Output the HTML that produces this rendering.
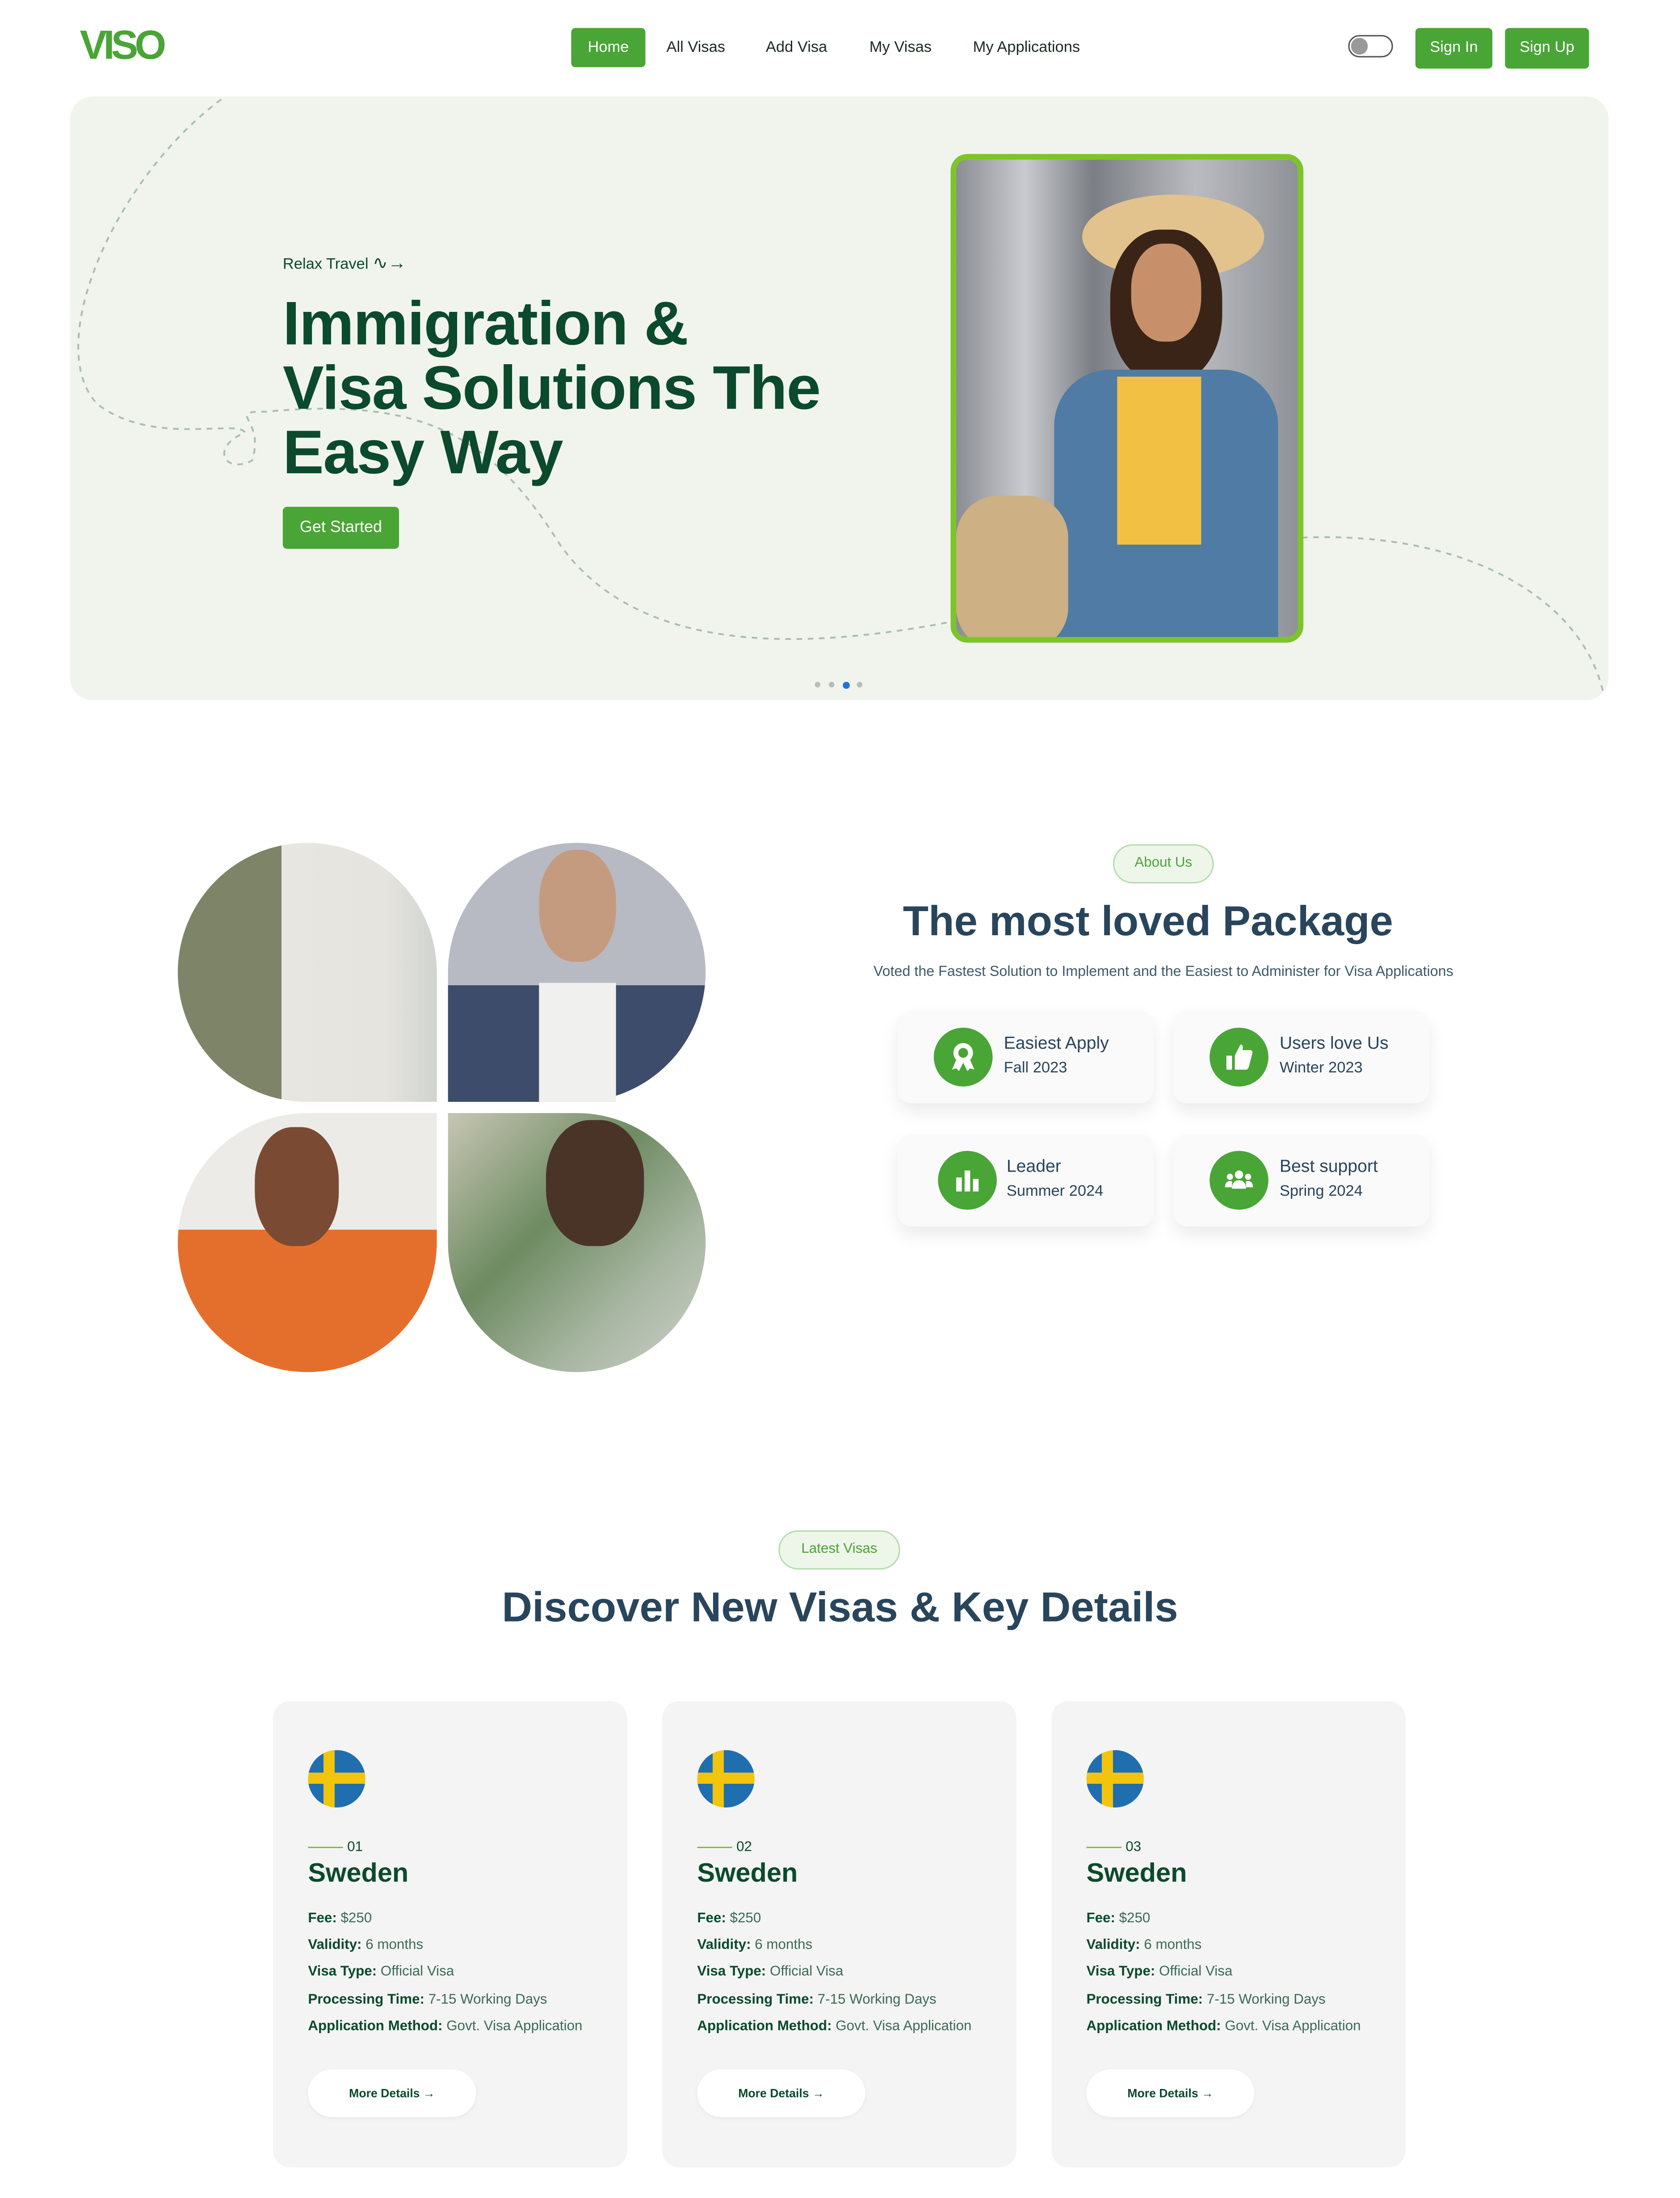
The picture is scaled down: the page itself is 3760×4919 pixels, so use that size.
<!DOCTYPE html>
<html><head><meta charset="utf-8"><style>
html,body{margin:0;padding:0;width:3760px;height:4919px;overflow:hidden;background:#fff}
#w{position:absolute;left:0;top:0;width:1200px;height:1570px;transform:scale(3.13333);transform-origin:0 0;font-family:"Liberation Sans",sans-serif}
.a{position:absolute}
.nav{font-size:11px;color:#1c2a22;top:28px}
.btn{background:#49a535;color:#fff;border-radius:3px;font-size:11px;text-align:center}
.card{position:absolute;width:183px;height:66px;background:#fafafa;border-radius:10px;box-shadow:0 6px 12px rgba(0,0,0,.08)}
.ic{position:absolute;left:26px;top:12px;width:42px;height:42px;border-radius:50%;background:#49a535}
.ic svg{position:absolute;left:9px;top:9px}
.ct{position:absolute;left:76px;top:15px;font-size:12.5px;color:#28455c;line-height:17px}
.vc{position:absolute;top:1215px;width:253px;height:333px;background:#f4f4f4;border-radius:12px;overflow:hidden}
.flag{position:absolute;left:25px;top:35px;width:41px;height:41px;border-radius:50%;background:linear-gradient(90deg,transparent 11px,#f2c40c 11px,#f2c40c 19px,transparent 19px),linear-gradient(180deg,#1f6fb0 16px,#f2c40c 16px,#f2c40c 24px,#1f6fb0 24px)}
.num{position:absolute;left:25px;top:99px;font-size:10px;color:#0b4a2c}
.num:before{content:"";display:inline-block;width:25px;height:1px;background:#7dc42a;vertical-align:middle;margin-right:3px}
.sw{position:absolute;left:25px;top:113px;font-size:19px;font-weight:bold;color:#0b4a2c}
.li{position:absolute;left:25px;top:146px;font-size:10px;color:#0b4a2c;line-height:19.2px}
.li b{font-weight:bold}.li span{color:#3a6b55}
.md{position:absolute;left:25px;top:263px;width:120px;height:34px;border-radius:17px;background:#fff;font-size:8.5px;font-weight:bold;color:#0b4a2c;text-align:center;line-height:34px;box-shadow:0 1px 3px rgba(0,0,0,.05)}
</style></head><body><div id="w">
<div class="a" style="left:57px;top:17px;font-size:29px;font-weight:bold;color:#49a535;letter-spacing:-2.5px">VISO</div>
<div class="a btn" style="left:408px;top:20px;width:53px;height:28px;line-height:28px">Home</div>
<div class="a nav" style="left:476px">All Visas</div>
<div class="a nav" style="left:547px">Add Visa</div>
<div class="a nav" style="left:621px">My Visas</div>
<div class="a nav" style="left:695px">My Applications</div>
<div class="a" style="left:963px;top:25px;width:30px;height:14px;border:1px solid #555;border-radius:8px"><div style="width:12px;height:12px;margin:1px;border-radius:50%;background:#999"></div></div>
<div class="a btn" style="left:1011px;top:20px;width:55px;height:29px;line-height:29px">Sign In</div>
<div class="a btn" style="left:1075px;top:20px;width:60px;height:29px;line-height:29px">Sign Up</div>

<div class="a" style="left:50px;top:69px;width:1099px;height:431px;background:#f1f4ec;border-radius:16px;overflow:hidden">
<svg class="a" style="left:0;top:0" width="1099" height="431" fill="none" stroke="#a9bfae" stroke-width="1.3" stroke-dasharray="4 4"><path d="M108 2C30 60-20 180 20 220C60 250 120 230 125 240C100 250 110 270 130 260C140 230 110 225 140 225C250 215 300 240 350 320C400 390 500 400 630 375"/><path d="M880 315C1000 310 1080 360 1095 425"/></svg>
</div>
<div class="a" style="left:202px;top:180px;font-size:11px;color:#0b4a2c">Relax Travel <span style="font-size:13px">∿→</span></div>
<div class="a" style="left:202px;top:209px;font-size:44px;line-height:46px;color:#0b4a2c;font-weight:bold;letter-spacing:-0.5px">Immigration &amp;<br>Visa Solutions The<br>Easy Way</div>
<div class="a btn" style="left:202px;top:362px;width:83px;height:30px;line-height:30px;font-size:11.5px">Get Started</div>
<div class="a" style="left:679px;top:110px;width:244px;height:341px;border:4px solid #7dc42a;border-radius:12px;overflow:hidden;background:linear-gradient(90deg,#8a8d92,#c9cbcf 20%,#7b7e84 40%,#b9bbc0 70%,#8e9196)">
<div class="a" style="left:90px;top:25px;width:130px;height:60px;border-radius:50%;background:#e2c38e"></div>
<div class="a" style="left:110px;top:50px;width:80px;height:110px;border-radius:45%;background:#3a2418"></div>
<div class="a" style="left:125px;top:60px;width:50px;height:70px;border-radius:45%;background:#c8906a"></div>
<div class="a" style="left:70px;top:150px;width:160px;height:200px;border-radius:40px 40px 0 0;background:#4f7ba5"></div>
<div class="a" style="left:115px;top:155px;width:60px;height:120px;background:#f2c043"></div>
<div class="a" style="left:0;top:240px;width:80px;height:110px;border-radius:30px;background:#cdb083"></div>
</div>
<div class="a" style="left:582px;top:487px;width:4px;height:4px;border-radius:50%;background:#bbb"></div>
<div class="a" style="left:592px;top:487px;width:4px;height:4px;border-radius:50%;background:#bbb"></div>
<div class="a" style="left:602px;top:487px;width:5px;height:5px;border-radius:50%;background:#1b74e4"></div>
<div class="a" style="left:612px;top:487px;width:4px;height:4px;border-radius:50%;background:#bbb"></div>

<div class="a" style="left:127px;top:602px;width:185px;height:185px;border-radius:50% 50% 0 50%;background:linear-gradient(90deg,#7e8468 0,#7e8468 40%,#e8e6e0 40%,#e6e4de 80%,#d0d3cf)"></div>
<div class="a" style="left:320px;top:602px;width:184px;height:185px;border-radius:50% 50% 50% 0;background:linear-gradient(180deg,#b8bac3 55%,#3d4c6a 55%)"><div class="a" style="left:65px;top:5px;width:55px;height:80px;border-radius:45%;background:#c59b80"></div><div class="a" style="left:65px;top:100px;width:55px;height:85px;background:#f0f0ee"></div></div>
<div class="a" style="left:127px;top:795px;width:185px;height:185px;border-radius:50% 0 50% 50%;background:linear-gradient(180deg,#ecebe8 45%,#e46f2c 45%)"><div class="a" style="left:55px;top:10px;width:60px;height:85px;border-radius:45%;background:#7a4a33"></div></div>
<div class="a" style="left:320px;top:795px;width:184px;height:185px;border-radius:0 50% 50% 50%;background:linear-gradient(135deg,#c7c6b4,#6e8b62 40%,#a6b5a0 70%,#cfd1cb)"><div class="a" style="left:70px;top:5px;width:70px;height:90px;border-radius:45%;background:#4a3428"></div></div>

<div class="a" style="left:795px;top:603px;width:70px;height:26px;border:1.3px solid #b6dcac;border-radius:14px;background:#eef6ea;color:#49a535;font-size:10px;text-align:center;line-height:26px">About Us</div>
<div class="a" style="left:520px;top:642px;width:600px;text-align:center;font-size:30px;font-weight:bold;color:#28455c">The most loved Package</div>
<div class="a" style="left:531px;top:689px;width:600px;text-align:center;font-size:10.3px;color:#3d5a6a">Voted the Fastest Solution to Implement and the Easiest to Administer for Visa Applications</div>
<div class="card" style="left:641px;top:722px"><div class="ic"><svg width="24" height="24" viewBox="0 0 24 24" fill="#fff"><circle cx="12" cy="9" r="7"/><circle cx="12" cy="9" r="3.5" fill="#49a535"/><path d="M7 14l-3 7 3-1 2 2 3-6zM17 14l3 7-3-1-2 2-3-6z"/></svg></div><div class="ct">Easiest Apply<br><span style="font-size:11px">Fall 2023</span></div></div>
<div class="card" style="left:838px;top:722px"><div class="ic"><svg width="24" height="24" viewBox="0 0 24 24" fill="#fff"><rect x="3" y="11" width="4" height="10"/><path d="M9 11l4-8c2 0 2 2 1.5 4H20c1 0 2 1 1.5 2.5L19 19c-.3 1-1 2-2 2H9z"/></svg></div><div class="ct">Users love Us<br><span style="font-size:11px">Winter 2023</span></div></div>
<div class="card" style="left:641px;top:810px"><div class="ic" style="left:29px"><svg width="24" height="24" viewBox="0 0 24 24" fill="#fff"><rect x="4" y="10" width="4" height="10"/><rect x="10" y="5" width="4" height="15"/><rect x="16" y="11" width="4" height="9"/></svg></div><div class="ct" style="left:78px">Leader<br><span style="font-size:11px">Summer 2024</span></div></div>
<div class="card" style="left:838px;top:810px"><div class="ic"><svg width="24" height="24" viewBox="0 0 24 24" fill="#fff"><circle cx="12" cy="8" r="3"/><circle cx="5.5" cy="9.5" r="2.2"/><circle cx="18.5" cy="9.5" r="2.2"/><path d="M7 18c0-4 2-6 5-6s5 2 5 6zM2 17c0-3 1.5-4.5 3.5-4.5S7 13 7 14v3zM22 17c0-3-1.5-4.5-3.5-4.5S17 13 17 14v3z"/></svg></div><div class="ct">Best support<br><span style="font-size:11px">Spring 2024</span></div></div>

<div class="a" style="left:556px;top:1093px;width:85px;height:26px;border:1.3px solid #b6dcac;border-radius:14px;background:#eef6ea;color:#49a535;font-size:10px;text-align:center;line-height:26px">Latest Visas</div>
<div class="a" style="left:300px;top:1132px;width:600px;text-align:center;font-size:30px;font-weight:bold;color:#28455c">Discover New Visas &amp; Key Details</div>

<div class="vc" style="left:195px"><div class="flag"></div><div class="num">01</div><div class="sw">Sweden</div><div class="li"><b>Fee:</b> <span>$250</span><br><b>Validity:</b> <span>6 months</span><br><b>Visa Type:</b> <span>Official Visa</span><br><b>Processing Time:</b> <span>7-15 Working Days</span><br><b>Application Method:</b> <span>Govt. Visa Application</span></div><div class="md">More Details →</div></div>
<div class="vc" style="left:473px"><div class="flag"></div><div class="num">02</div><div class="sw">Sweden</div><div class="li"><b>Fee:</b> <span>$250</span><br><b>Validity:</b> <span>6 months</span><br><b>Visa Type:</b> <span>Official Visa</span><br><b>Processing Time:</b> <span>7-15 Working Days</span><br><b>Application Method:</b> <span>Govt. Visa Application</span></div><div class="md">More Details →</div></div>
<div class="vc" style="left:751px"><div class="flag"></div><div class="num">03</div><div class="sw">Sweden</div><div class="li"><b>Fee:</b> <span>$250</span><br><b>Validity:</b> <span>6 months</span><br><b>Visa Type:</b> <span>Official Visa</span><br><b>Processing Time:</b> <span>7-15 Working Days</span><br><b>Application Method:</b> <span>Govt. Visa Application</span></div><div class="md">More Details →</div></div>
</div></body></html>
